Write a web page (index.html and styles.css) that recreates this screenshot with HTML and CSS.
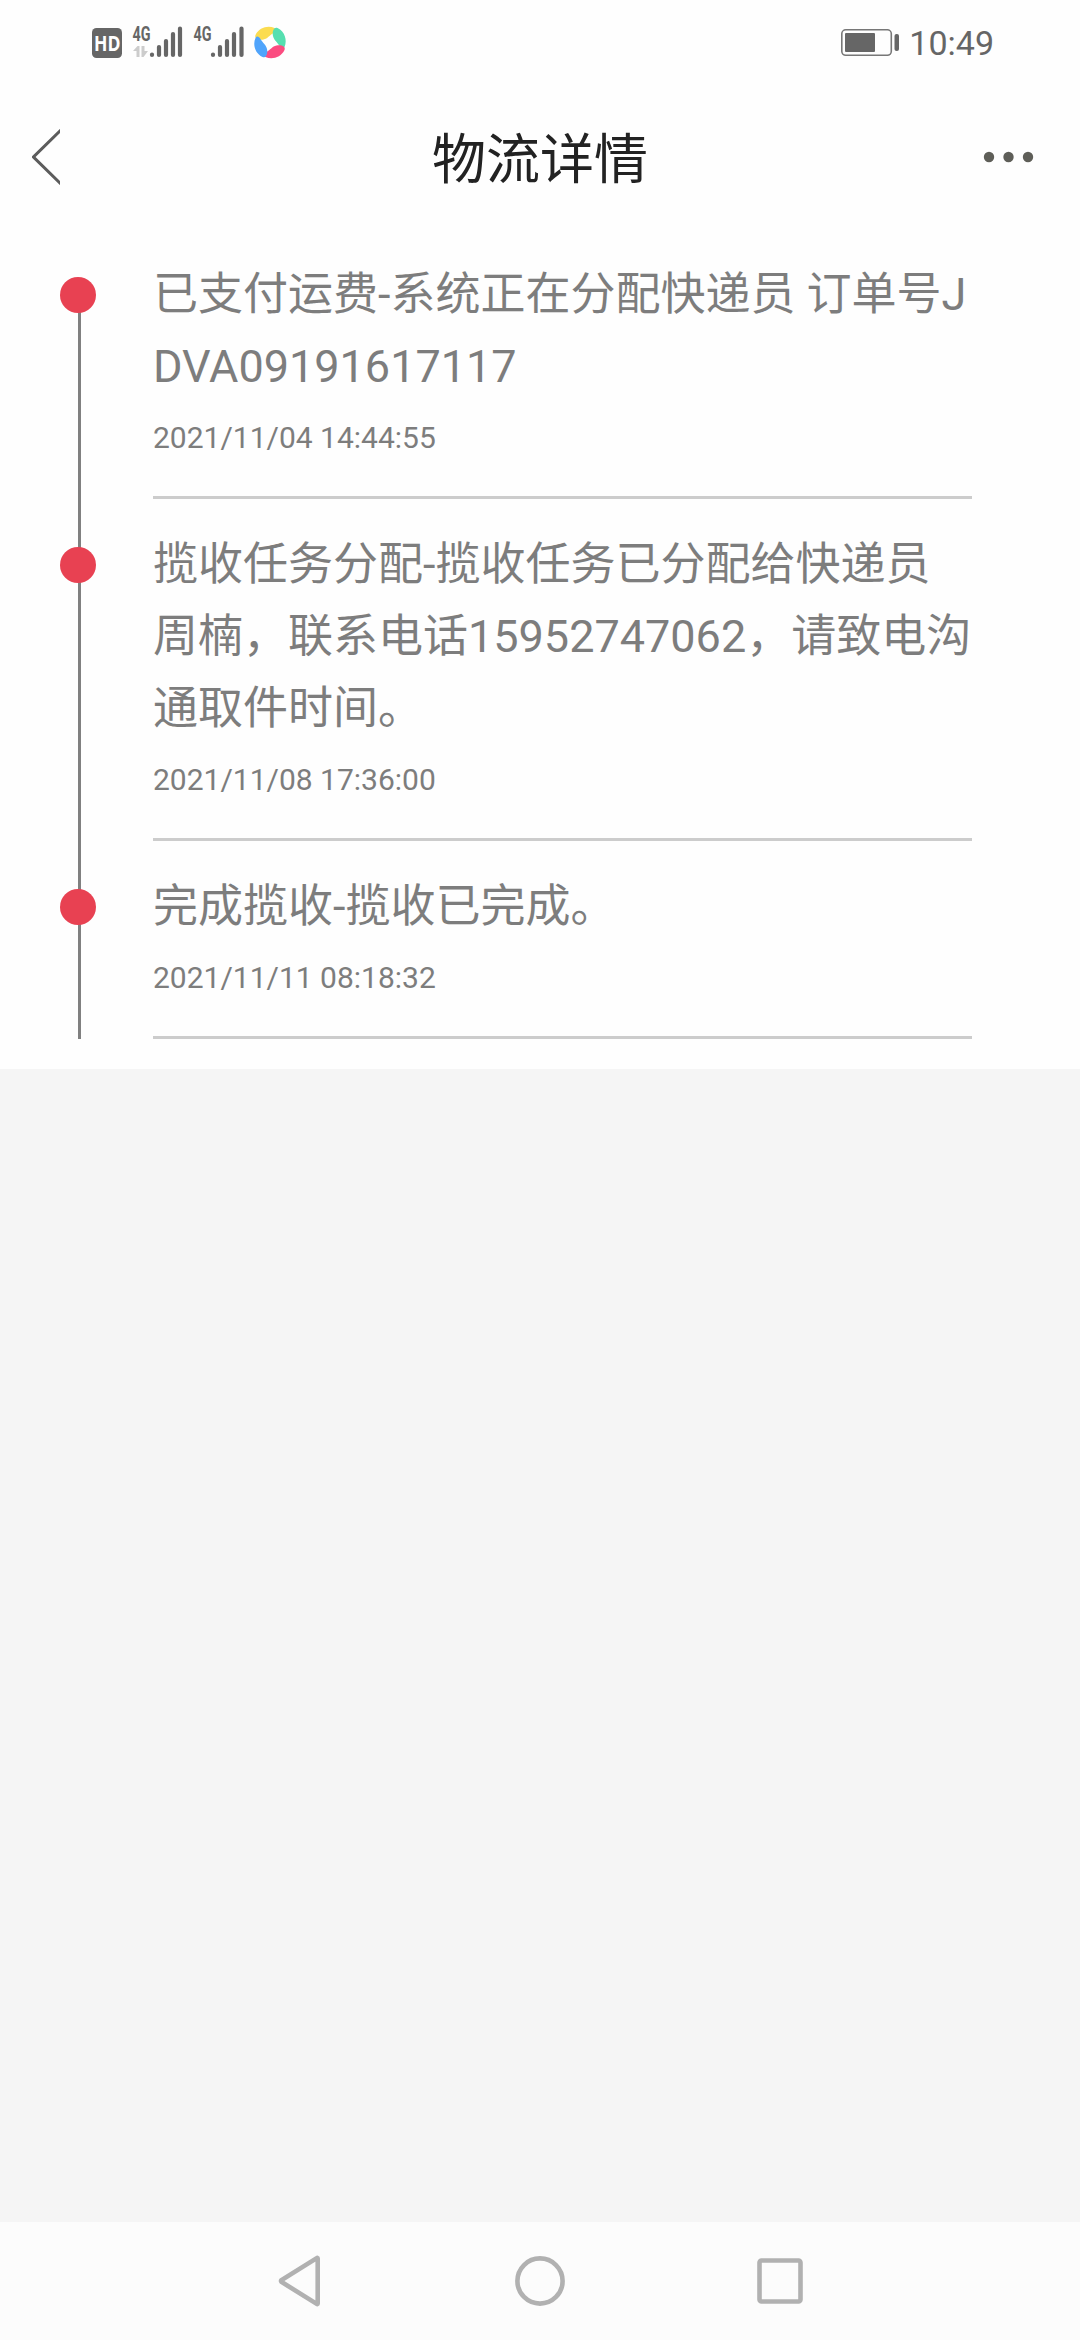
FILE: index.html
```html
<!DOCTYPE html>
<html lang="zh-CN">
  <head>
    <meta charset="utf-8">
    <title>物流详情</title>
    <link rel="stylesheet" href="styles.css">
  </head>

<body>
  <div class="status">
    <svg class="status-icons" width="200" height="40" viewBox="90 22 200 40">
      <rect x="92" y="28" width="30" height="30" rx="4.5" fill="#666"/>
      <text class="hd" x="94" y="50.5" textLength="26.5" lengthAdjust="spacingAndGlyphs">HD</text>
      <text class="net" x="132.5" y="41" textLength="18" lengthAdjust="spacingAndGlyphs">4G</text>
      <path fill="#ccc" d="M133 51l4.500-5h2v11h-3v-6zM141.500 46h3v5h3.500l-4.500 6h-2z"/>
      <g class="bars">
        <path d="M152 54.5v.5M159 47v8M166 41v14M173 34v21M180 28.5v26.5"/>
        <path d="M213 54.5v.5M220 47v8M227 41v14M234 34v21M241.5 28.5v26.5"/>
      </g>
      <text class="net" x="193.5" y="41" textLength="18" lengthAdjust="spacingAndGlyphs">4G</text>
      <defs>
        <path id="blade" d="M255.500 35C259 27.500 268 25 274.500 28C277 29.500 276 31.500 273.500 33C269 35.500 268 38.500 263.500 39.500C258.500 40.500 254 38.500 255.500 35z"/>
      </defs>
      <use href="#blade" fill="#fbdc50"/>
      <use href="#blade" fill="#56dfb0" transform="rotate(90 270 42.5)"/>
      <use href="#blade" fill="#fb4c80" transform="rotate(180 270 42.5)"/>
      <use href="#blade" fill="#50a4fb" transform="rotate(270 270 42.5)"/>
    </svg>
    <div class="status-right">
      <svg width="60" height="30" viewBox="840 28 60 30">
        <rect x="841.8" y="29.8" width="49.5" height="25.5" rx="4" fill="none" stroke="#777" stroke-width="1.6"/>
        <rect x="845" y="33" width="30" height="19" rx="1" fill="#666"/>
        <rect x="894.5" y="34" width="4.5" height="17" rx="2" fill="#666"/>
      </svg>
      <span class="clock">10:49</span>
    </div>
  </div>

  <div class="header">
    <svg class="back" width="28" height="56" viewBox="32 128 28 56">
      <path d="M62 128L33.500 156L62 184" fill="none" stroke="#5c5c5c" stroke-width="3"/>
    </svg>
    <h1>物流详情</h1>
    <svg class="more" width="52" height="12" viewBox="0 0 52 12">
      <g fill="#5e5e58"><circle cx="6" cy="6" r="5.2"/><circle cx="25.5" cy="6" r="5.2"/><circle cx="45" cy="6" r="5.2"/></g>
    </svg>
  </div>

  <ul class="track">
    <li>
      <div class="detail">
        <p>已支付运费-系统正在分配快递员 订单号JDVA09191617117</p>
        <time>2021/11/04 14:44:55</time>
      </div>
    </li>
    <li>
      <div class="detail">
        <p>揽收任务分配-揽收任务已分配给快递员周楠，联系电话15952747062，请致电沟通取件时间。</p>
        <time>2021/11/08 17:36:00</time>
      </div>
    </li>
    <li>
      <div class="detail">
        <p>完成揽收-揽收已完成。</p>
        <time>2021/11/11 08:18:32</time>
      </div>
    </li>
  </ul>

  <div class="nav">
    <svg width="50" height="54" viewBox="0 0 50 54"><path d="M42.700 4.500v45q0 1-1 .3L6.600 28q-1-1 0-2L41.700 4.200q1-.7 1 .3z"/></svg>
    <svg width="50" height="54" viewBox="0 0 50 54"><circle cx="25" cy="27" r="22.6"/></svg>
    <svg width="50" height="54" viewBox="0 0 50 54"><rect x="4.5" y="6.5" width="41" height="41" rx="2"/></svg>
  </div>
</body>
</html>
```

FILE: styles.css
```css
* { box-sizing: border-box; }

body
{
  display: flex;
  flex-direction: column;
  margin: 0;
  height: 2340px;
  background: #f5f5f5;
  color: #7d7d7d;
  font-family: Roboto, "Noto Sans CJK SC", sans-serif;
}

.status
{
  display: flex;
  justify-content: space-between;
  align-items: center;
  height: 84px;
  padding: 0 86px 0 90px;
  background: #fefefe;
}
.status-icons { display: block; }
.status-right { display: flex; align-items: center; gap: 9px; padding-top: 2px; }
.clock { font-size: 34px; line-height: 40px; color: #666; }
.hd { font: bold 21px "Open Sans", sans-serif; fill: #fff; }
.net { font: bold 21px Roboto, sans-serif; fill: #666; }
.bars { fill: none; stroke: #666; stroke-width: 4.2; stroke-linecap: round; }

.header
{
  display: grid;
  grid-template-columns: 120px 1fr 120px;
  align-items: center;
  height: 145px;
  background: #fefefe;
}
.header h1
{
  margin: 0;
  padding-top: 9px;
  font-size: 54px;
  font-weight: normal;
  line-height: 80px;
  text-align: center;
  color: #222;
}
.back { margin-left: 32px; }
.more { margin-left: 23px; }

.track
{
  margin: 0;
  padding: 0 108px 30px 60px;
  list-style: none;
  background: #fefefe;
}
.track li { position: relative; padding-left: 93px; }

/* vertical line, joined from item to item */
.track li::before
{
  content: "";
  position: absolute;
  left: 18px;
  top: 0;
  bottom: 0;
  width: 3px;
  background: #808080;
}
.track li:first-child::before { top: 60px; }
.track li::after
{
  content: "";
  position: absolute;
  left: 0;
  top: 48px;
  width: 36px;
  height: 36px;
  border-radius: 50%;
  background: #e84152;
}
.detail { padding-top: 30px; border-bottom: 3px solid #ccc; }
.detail p
{
  margin: 0;
  font-size: 45px;
  line-height: 72px;
  word-break: break-all;
}
.detail time
{
  display: block;
  height: 93px;
  font-size: 30px;
  line-height: 70px;
}

.nav
{
  display: flex;
  justify-content: center;
  align-items: center;
  gap: 190px;
  height: 118px;
  margin-top: auto;
  background: #fcfcfc;
}
.nav svg { fill: none; stroke: #b1b1b1; stroke-width: 4.6; }
```
